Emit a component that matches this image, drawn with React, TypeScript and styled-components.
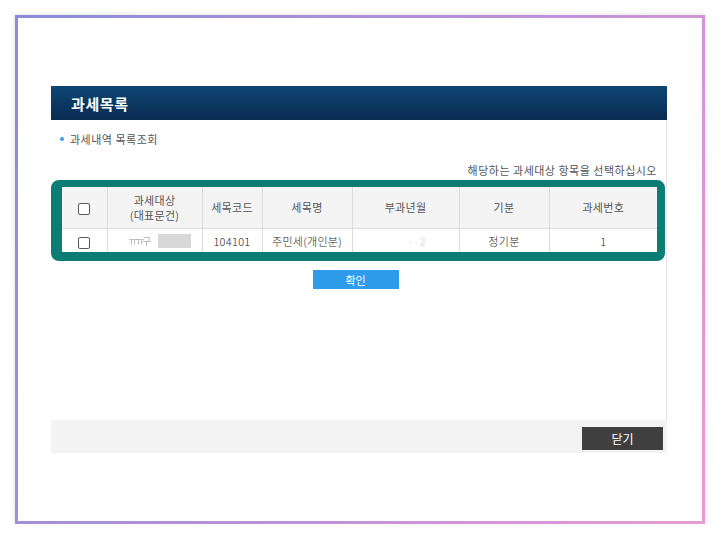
import React from "react";
import styled, { createGlobalStyle } from "styled-components";

const GlobalStyle = createGlobalStyle`
  html, body {
    margin: 0;
    padding: 0;
    background: #ffffff;
  }
  body {
    font-family: "Noto Sans CJK KR", "Noto Sans", "Liberation Sans", sans-serif;
    color: #333;
  }
`;

const Frame = styled.div`
  box-sizing: border-box;
  margin: 15px 0 0 15px;
  width: 690px;
  height: 509px;
  border: 3px solid transparent;
  background: linear-gradient(#fff, #fff) padding-box,
    linear-gradient(115deg, #8a8dd9 0%, #b48fd9 45%, #e89bd5 100%) border-box;
  box-shadow: 0 0 5px rgba(0, 0, 0, 0.14);
  padding: 68px 0 0 33px;
`;

const Panel = styled.div`
  width: 616px;
  display: flex;
  flex-direction: column;
`;

const Header = styled.div`
  height: 34px;
  display: flex;
  align-items: center;
  padding-left: 20px;
  background: linear-gradient(180deg, #0d4772 0%, #0a3760 55%, #0b2c52 100%);
  color: #fff;
  font-size: 15px;
  font-weight: 700;
  letter-spacing: 0.6px;
`;

const Body = styled.div`
  height: 300px;
  border-right: 1px solid #e6e6e6;
  display: flex;
  flex-direction: column;
`;

const BulletLine = styled.div`
  margin: 12px 0 0 9px;
  display: flex;
  align-items: center;
  gap: 6px;
  font-size: 11px;
  line-height: 14px;
  letter-spacing: 0.5px;
  color: #555;
  &::before {
    content: "";
    width: 4px;
    height: 4px;
    border-radius: 50%;
    background: #3d9ee0;
  }
`;

const Note = styled.div`
  margin: 17px 9px 0 0;
  text-align: right;
  font-size: 11px;
  line-height: 14px;
  letter-spacing: 0.5px;
  color: #555;
`;

const Highlight = styled.div`
  margin-top: 3px;
  width: 614px;
  box-sizing: border-box;
  border-style: solid;
  border-color: #0b7d74;
  border-width: 7px 8px 9px 11px;
  border-radius: 8px;
  overflow: hidden;
  background: #fff;
`;

const Table = styled.table`
  width: 595px;
  border-collapse: collapse;
  table-layout: fixed;
  font-family: inherit;
`;

const HeadCell = styled.th`
  height: 41px;
  padding: 0;
  background: #f4f4f4;
  border-right: 1px solid #dcdcdc;
  border-bottom: 1px solid #dcdcdc;
  font-size: 11px;
  font-weight: 400;
  line-height: 15px;
  letter-spacing: 0.3px;
  color: #555;
  text-align: center;
  &:last-child {
    border-right: none;
  }
`;

const Cell = styled.td`
  height: 23px;
  padding: 0;
  border-right: 1px solid #dcdcdc;
  font-size: 11px;
  font-weight: 300;
  letter-spacing: 0.3px;
  color: #1e1e1e;
  text-align: center;
  &:last-child {
    border-right: none;
  }
`;

const Check = styled.span`
  display: inline-block;
  vertical-align: middle;
  width: 10px;
  height: 10px;
  border: 1px solid #5a5a5a;
  border-radius: 2px;
  background: #fff;
`;

const Masked = styled.div`
  display: flex;
  align-items: center;
  gap: 9px;
  padding-left: 21px;
`;

const Blurred = styled.span<{ $amount: number; $tone: string }>`
  color: ${(p) => p.$tone};
  filter: blur(${(p) => p.$amount}px);
`;

const SmallBlur = styled(Blurred)`
  font-size: 10px;
  letter-spacing: -2.5px;
`;

const MonthBlur = styled.div`
  padding-left: 22px;
`;

const GrayBox = styled.span`
  width: 33px;
  height: 14px;
  background: #d8d8d8;
`;

const Actions = styled.div`
  margin-top: 9px;
  display: flex;
  justify-content: center;
  padding-right: 6px;
`;

const ConfirmButton = styled.button`
  width: 86px;
  height: 19px;
  border: none;
  padding: 0;
  background: #2f9ceb;
  color: #fff;
  font-family: inherit;
  font-size: 11px;
`;

const Footer = styled.div`
  height: 33px;
  background: #f3f3f3;
  display: flex;
  justify-content: flex-end;
  align-items: flex-start;
  padding: 7px 4px 0 0;
  box-sizing: border-box;
`;

const CloseButton = styled.button`
  width: 81px;
  height: 23px;
  border: none;
  padding: 0;
  background: #3f3f3f;
  color: #fff;
  font-family: inherit;
  font-size: 12px;
`;

const columns = [
  { w: 45, label: "" },
  { w: 95, label: "과세대상\n(대표문건)" },
  { w: 60, label: "세목코드" },
  { w: 90, label: "세목명" },
  { w: 107, label: "부과년월" },
  { w: 90, label: "기분" },
  { w: 108, label: "과세번호" },
];

export default function App() {
  return (
    <>
      <GlobalStyle />
      <Frame>
        <Panel>
          <Header>과세목록</Header>
          <Body>
            <BulletLine>과세내역 목록조회</BulletLine>
            <Note>해당하는 과세대상 항목을 선택하십시오</Note>
            <Highlight>
              <Table>
                <colgroup>
                  {columns.map((c, i) => (
                    <col key={i} style={{ width: c.w }} />
                  ))}
                </colgroup>
                <thead>
                  <tr>
                    {columns.map((c, i) => (
                      <HeadCell key={i}>
                        {i === 0 ? (
                          <Check />
                        ) : (
                          c.label.split("\n").map((line, j) => <div key={j}>{line}</div>)
                        )}
                      </HeadCell>
                    ))}
                  </tr>
                </thead>
                <tbody>
                  <tr>
                    <Cell>
                      <Check />
                    </Cell>
                    <Cell>
                      <Masked>
                        <SmallBlur $amount={0.5} $tone="#888">ㅠㅠ구</SmallBlur>
                        <GrayBox />
                      </Masked>
                    </Cell>
                    <Cell>104101</Cell>
                    <Cell>주민세(개인분)</Cell>
                    <Cell>
                      <MonthBlur>
                        <Blurred $amount={1} $tone="#bbb">··2</Blurred>
                      </MonthBlur>
                    </Cell>
                    <Cell>정기분</Cell>
                    <Cell>1</Cell>
                  </tr>
                </tbody>
              </Table>
            </Highlight>
            <Actions>
              <ConfirmButton>확인</ConfirmButton>
            </Actions>
          </Body>
          <Footer>
            <CloseButton>닫기</CloseButton>
          </Footer>
        </Panel>
      </Frame>
    </>
  );
}
